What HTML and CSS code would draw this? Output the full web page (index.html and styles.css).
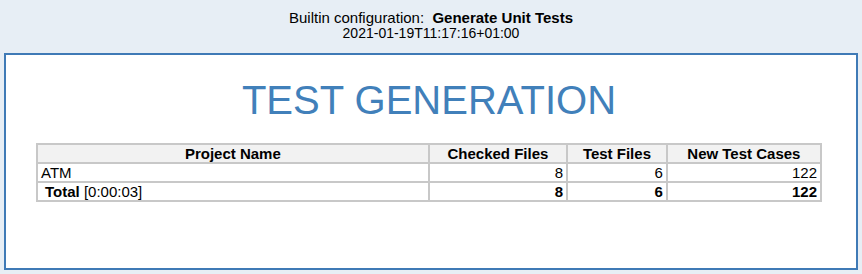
FILE: index.html
```html
<!DOCTYPE html>
<html>
<head>
<meta charset="utf-8">
<link rel="stylesheet" href="styles.css">
</head>
<body>
<div class="top">
  <div class="config">Builtin configuration:&nbsp; <b>Generate Unit Tests</b></div>
  <div class="date">2021-01-19T11:17:16+01:00</div>
</div>
<div class="panel">
  <h1 class="title">TEST GENERATION</h1>
  <table class="grid">
    <thead>
      <tr>
        <th class="c1">Project Name</th>
        <th class="c2">Checked Files</th>
        <th class="c3">Test Files</th>
        <th class="c4">New Test Cases</th>
      </tr>
    </thead>
    <tbody>
      <tr>
        <td class="name">ATM</td>
        <td class="num">8</td>
        <td class="num">6</td>
        <td class="num">122</td>
      </tr>
      <tr class="total">
        <td class="name total-name"><b>Total</b> [0:00:03]</td>
        <td class="num"><b>8</b></td>
        <td class="num"><b>6</b></td>
        <td class="num"><b>122</b></td>
      </tr>
    </tbody>
  </table>
</div>
</body>
</html>
```
FILE: styles.css
```css
html, body {
  margin: 0;
  padding: 0;
}
body {
  background: #e7eef5;
  font-family: "Liberation Sans", Arial, sans-serif;
  color: #000;
  font-size: 14px;
  padding: 0 4px 4px 4px;
}
.top {
  height: 53px;
  box-sizing: border-box;
  padding-top: 9px;
  text-align: center;
}
.config {
  font-size: 15px;
  line-height: 17px;
}
.date {
  font-size: 14px;
  line-height: 15px;
}
.panel {
  background: #fff;
  border: 2px solid #3f7ab6;
  height: 213px;
  padding: 0 34px 0 30px;
}
.title {
  margin: 0;
  padding-top: 22px;
  height: 66px;
  text-align: center;
  font-weight: normal;
  font-size: 40px;
  line-height: 46px;
  color: #4180ba;
}
.grid {
  border: 1px solid #c8c8c8;
  border-spacing: 0;
  width: 786px;
  font-size: 15px;
}
.grid th, .grid td {
  border: 1px solid #c8c8c8;
  padding: 0 3px;
  height: 17px;
  line-height: 17px;
}
.grid th {
  background: #f2f2f2;
  font-weight: bold;
  text-align: center;
}
.c1 { width: 386px; }
.c2 { width: 131px; }
.c3 { width: 92px; }
.c4 { width: 147px; }
.name { text-align: left; padding-left: 5px; }
.grid .total-name { padding-left: 7px; }
.num { text-align: right; }
```
